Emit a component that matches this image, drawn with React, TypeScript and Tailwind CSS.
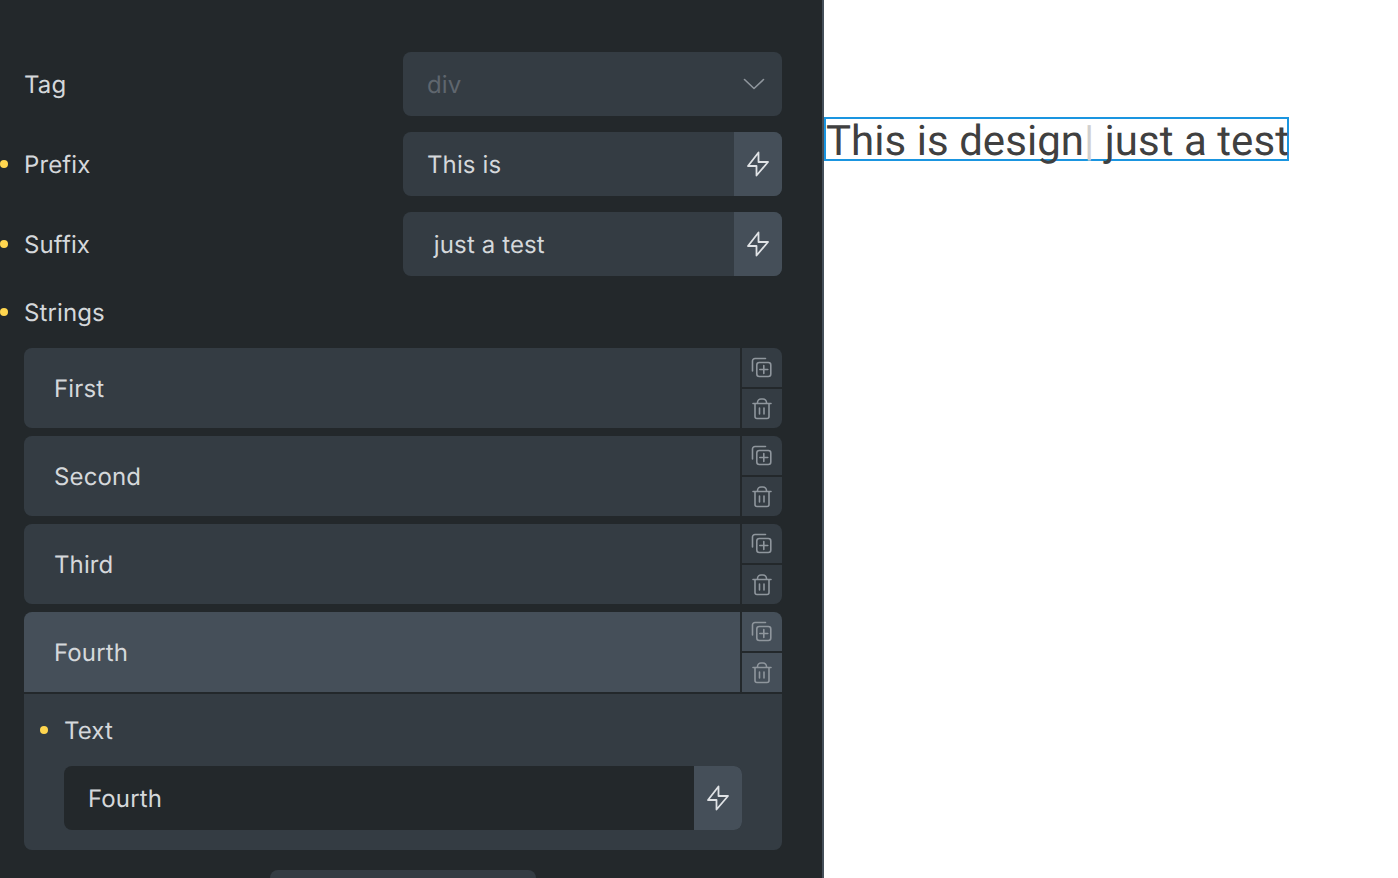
import React from "react";

const Bolt = () => (
  <svg width="24" height="26" viewBox="0 0 24 26" fill="none" stroke="#dfe2e5" strokeWidth="1.8" strokeLinejoin="round">
    <path d="M12.500 1.500 2 15h8.500v9.500L22 11h-9.500z" />
  </svg>
);
const Copy = () => (
  <svg width="22" height="22" viewBox="0 0 22 22" fill="none" stroke="#8f969d" strokeWidth="1.6" strokeLinecap="round" strokeLinejoin="round">
    <path d="M1.500 14V4A2.500 2.500 0 0 1 4 1.500h10.500" />
    <rect x="5.800" y="5.500" width="14" height="14" rx="2.500" />
    <path d="M12.800 8.500v8M8.800 12.500h8" />
  </svg>
);
const Trash = () => (
  <svg width="20" height="22" viewBox="0 0 20 22" fill="none" stroke="#8f969d" strokeWidth="1.6" strokeLinecap="round" strokeLinejoin="round">
    <path d="M1 5.500h18M3 5.500V18.500a2 2 0 0 0 2 2h10a2 2 0 0 0 2-2V5.500M5.500 5.500V4.500a3.500 3.500 0 0 1 3.500-3.500h2a3.500 3.500 0 0 1 3.500 3.500v1M7.500 10v6M12 10v6" />
  </svg>
);
const Chevron = () => (
  <svg width="22" height="12" viewBox="0 0 22 12" fill="none" stroke="#8f969d" strokeWidth="1.6" strokeLinecap="round" strokeLinejoin="round">
    <path d="M1.500 1.500 11 10.500l9.500-9" />
  </svg>
);
const Dot = ({ className = "left-0" }: { className?: string }) => (
  <span className={`absolute top-1/2 -mt-1 h-2 w-2 rounded-full bg-[#ffd64f] ${className}`} />
);

const FieldRow = ({ label, value, dot }: { label: string; value: string; dot?: boolean }) => (
  <div className="relative flex h-16 items-center pl-6 pr-10">
    {dot && <Dot className="left-0" />}
    <span className="flex-1 pt-0.5">{label}</span>
    <div className="flex h-16 w-[379px] overflow-hidden rounded-lg bg-[#343c43]">
      <span className="flex-1 self-center whitespace-pre pl-6 pt-0.5">{value}</span>
      <span className="flex w-12 items-center justify-center bg-[#454f59]"><Bolt /></span>
    </div>
  </div>
);

const Repeater = ({ label, active }: { label: string; active?: boolean }) => {
  const bg = active ? "bg-[#454f59]" : "bg-[#343c43]";
  return (
    <div className={`flex h-20 gap-0.5 overflow-hidden ${active ? "rounded-t-lg" : "rounded-lg"}`}>
      <div className={`flex flex-1 items-center pl-[30px] pt-0.5 ${bg}`}>{label}</div>
      <div className="flex w-10 flex-col gap-0.5">
        <span className={`flex flex-1 items-center justify-center ${bg}`}><Copy /></span>
        <span className={`flex flex-1 items-center justify-center ${bg}`}><Trash /></span>
      </div>
    </div>
  );
};

export default function App() {
  return (
    <div className="flex h-[878px] w-[1398px] overflow-hidden bg-white font-['Inter',sans-serif] text-[24px] tracking-[0.12px] text-[#d5d8db] antialiased [text-rendering:geometricPrecision]">
      <div className="flex w-[824px] shrink-0 flex-col border-r-2 border-[#454f59] bg-[#23282b] pt-[52px]">
        <div className="flex flex-col gap-4">
          <div className="flex h-16 items-center pl-6 pr-10">
            <span className="flex-1 pt-0.5">Tag</span>
            <div className="flex h-16 w-[379px] items-center justify-between rounded-lg bg-[#343c43] pl-6 pr-[17px]">
              <span className="pt-0.5 text-[#5f666e]">div</span>
              <Chevron />
            </div>
          </div>
          <FieldRow label="Prefix" value="This is" dot />
          <FieldRow label="Suffix" value=" just a test" dot />
        </div>
        <div className="relative mt-[18px] flex h-9 items-center pl-6">
          <Dot className="left-0" />
          <span className="pt-0.5">Strings</span>
        </div>
        <div className="mt-[18px] flex flex-col pl-6 pr-10">
          <div className="flex flex-col gap-2">
            <Repeater label="First" />
            <Repeater label="Second" />
            <Repeater label="Third" />
            <div>
              <Repeater label="Fourth" active />
              <div className="rounded-b-lg border-t-2 border-[#23282b] bg-[#343c43] px-10 pb-5 pt-[18px]">
                <div className="relative mb-[18px] flex h-9 items-center">
                  <Dot className="-left-6" />
                  <span className="pt-0.5">Text</span>
                </div>
                <div className="flex h-16 overflow-hidden rounded-lg bg-[#23282b]">
                  <span className="flex-1 self-center pl-6 pt-0.5">Fourth</span>
                  <span className="flex w-12 items-center justify-center bg-[#454f59]"><Bolt /></span>
                </div>
              </div>
            </div>
          </div>
          <div className="mx-auto mt-5 h-10 w-[266px] shrink-0 rounded-lg bg-[#343c43]" />
        </div>
      </div>
      <div className="flex-1 pt-[117px]">
        <div className="inline-block h-11 w-[465px] whitespace-pre border-2 border-[#1a95e0] font-['Roboto',sans-serif] text-[42px] font-normal leading-10 tracking-[0.04px] text-[#404040]">
          <span className="relative top-[3px]">This is design<span className="text-[#cfcfcf]">|</span> just a test</span>
        </div>
      </div>
    </div>
  );
}
